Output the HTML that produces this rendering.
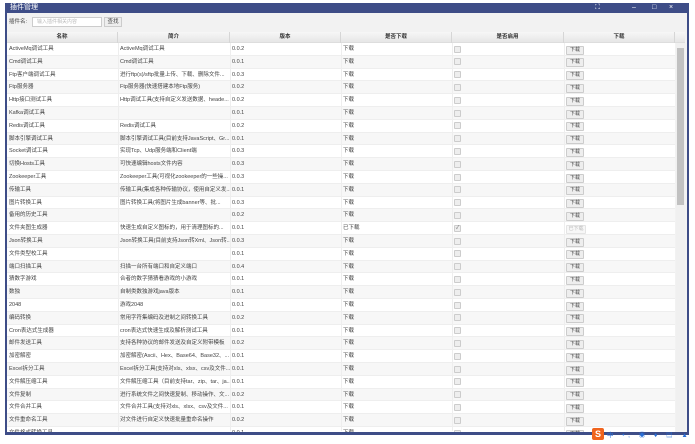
<!DOCTYPE html>
<html><head><meta charset="utf-8"><style>
*{margin:0;padding:0;box-sizing:border-box}
body{width:695px;height:444px;background:#fff;position:relative;overflow:hidden;font-family:"Liberation Sans","Noto Sans CJK SC",sans-serif;font-size:5.5px;color:#444}
.win{position:absolute;left:5px;top:3px;width:684px;height:434px;border:2px solid #3e4d87;border-top:none;background:#f2f2f2}
.title{position:absolute;left:5px;top:3px;width:684px;height:10px;background:#3e4d87;color:#fff;font-size:7px;line-height:10px;padding-left:5px}
.tb{position:absolute;top:18px;left:9px;font-size:5.5px;line-height:9px}
.inp{position:absolute;left:32px;top:17px;width:70px;height:10px;border:1px solid #ccc;background:#fff;color:#bbb;font-size:5px;line-height:8px;padding-left:4px}
.btn0{position:absolute;left:104px;top:17px;width:18px;height:10px;border:1px solid #ccc;background:#eee;font-size:5.5px;line-height:8px;text-align:center}
.hdr{position:absolute;left:7px;top:32px;width:678px;height:11px;background:linear-gradient(#f7f7f7,#e6e6e6);border-bottom:1px solid #ddd}
.hdr div{position:absolute;top:0;height:11px;line-height:11px;text-align:center;border-right:1px solid #d6d6d6;font-size:5.5px;font-weight:bold;color:#333}
.row{position:absolute;left:7px;width:668px;height:12.8px;line-height:12.8px;border-bottom:1px solid #eee}
.row span{position:absolute;top:0;white-space:nowrap;overflow:hidden}
.cb{position:absolute;left:447px;top:2.5px;width:7px;height:7px;border:1px solid #ccc;border-radius:1px;background:#eee}
.bt{position:absolute;left:559px;top:2.5px;width:18px;height:9px;border:1px solid #ccc;border-radius:1px;background:#eee;line-height:7px;text-align:center;font-size:5px}
.sb{position:absolute;left:676px;top:43px;width:9px;height:388px;background:#f0f0f0}
.th{position:absolute;left:677px;top:48px;width:7px;height:157px;background:#c1c1c1}
.vl{position:absolute;top:43px;width:1px;height:388px;background:#eee}
</style></head><body>
<div class="win"></div>
<div class="title">插件管理<span style="position:absolute;left:590px;font-size:7px">⛶</span><span style="position:absolute;left:627px">–</span><span style="position:absolute;left:647px">□</span><span style="position:absolute;left:664px">×</span></div>
<div class="tb">插件名:</div>
<div class="inp">输入插件相关内容</div>
<div class="btn0">查找</div>
<div class="hdr">
<div style="left:0;width:111px">名称</div>
<div style="left:111px;width:112px">简介</div>
<div style="left:223px;width:111px">版本</div>
<div style="left:334px;width:111px">是否下载</div>
<div style="left:445px;width:112px">是否启用</div>
<div style="left:557px;width:111px">下载</div>
</div>
<div id="rows"></div>
<div class="vl" style="left:118px"></div><div class="vl" style="left:230px"></div><div class="vl" style="left:341px"></div><div class="vl" style="left:452px"></div><div class="vl" style="left:564px"></div>
<div class="sb"></div><div class="th"></div>
<div style="position:absolute;left:0;top:432px;width:695px;height:12px;background:#fff"></div>
<div style="position:absolute;left:5px;top:432px;width:684px;height:3px;background:#3e4d87"></div>
<div style="position:absolute;left:592px;top:428px;width:12px;height:12px;background:#f0641e;color:#fff;font-size:9px;font-weight:bold;text-align:center;line-height:12px;border-radius:2px">S</div>
<div style="position:absolute;left:607px;top:429px;font-size:6.5px;color:#2a6fd6;letter-spacing:3.5px;white-space:nowrap">中 •, ◉ ♦ ▤ ▲ ▼ ▦</div>
<script>
var d=[["ActiveMq调试工具","ActiveMq调试工具","0.0.2"],["Cmd调试工具","Cmd调试工具","0.0.1"],["Ftp客户端调试工具","进行ftp(s)/sftp批量上传、下载、删除文件...","0.0.3"],["Ftp服务器","Ftp服务器(快速搭建本地Ftp服务)","0.0.2"],["Http接口测试工具","Http调试工具(支持自定义发送数据、heade...","0.0.2"],["Kafka调试工具","","0.0.1"],["Redis调试工具","Redis调试工具","0.0.2"],["脚本引擎调试工具","脚本引擎调试工具(目前支持JavaScript、Gr...","0.0.1"],["Socket调试工具","实现Tcp、Udp服务端和Client端","0.0.3"],["切换Hosts工具","可快速编辑hosts文件内容","0.0.3"],["Zookeeper工具","Zookeeper工具(可视化zookeeper的一些操...","0.0.3"],["传输工具","传输工具(集成各种传输协议，使用自定义发...","0.0.1"],["图片转换工具","图片转换工具(将图片生成banner等、批...","0.0.3"],["备用的历史工具","","0.0.2"],["文件夹图生成器","快速生成自定义图标的，用于清理图标的...","0.0.1",1],["Json转换工具","Json转换工具(目前支持Json转Xml、Json转...","0.0.3"],["文件类型校工具","","0.0.1"],["端口扫描工具","扫描一台所有端口和自定义端口","0.0.4"],["猜数字游戏","合者的数字猜猜看游戏的小游戏","0.0.1"],["数独","自制类数独游戏java版本","0.0.1"],["2048","游戏2048","0.0.1"],["编码转换","常用字符集编码及进制之间转换工具","0.0.2"],["Cron表达式生成器","cron表达式快速生成及解析测试工具","0.0.1"],["邮件发送工具","支持各种协议的邮件发送及自定义附带模板","0.0.2"],["加密解密","加密解密(Ascii、Hex、Base64、Base32、...","0.0.1"],["Excel拆分工具","Excel拆分工具(支持对xls、xlsx、csv及文件...","0.0.1"],["文件解压缩工具","文件解压缩工具（目前支持tar、zip、tar、ja...","0.0.1"],["文件复制","进行系统文件之间快速复制、移动操作、文...","0.0.2"],["文件合并工具","文件合并工具(支持对xls、xlsx、csv及文件...","0.0.1"],["文件重命名工具","对文件进行自定义快速批量重命名操作","0.0.2"],["文件格式转换工具","","0.0.1"]];
var h="";d.forEach(function(r,i){var t=43+i*12.8;var dl=r[3];
h+='<div class="row" style="top:'+t+'px;background:'+(i%2?'#f7f7f7':'#fff')+'"><span style="left:2px;width:108px">'+r[0]+'</span><span style="left:113px;width:110px">'+r[1]+'</span><span style="left:225px">'+r[2]+'</span><span style="left:336px">'+(dl?'已下载':'下载')+'</span><div class="cb" style="'+(dl?'color:#555;font-size:5px;line-height:5px;text-align:center':'')+'">'+(dl?'✓':'')+'</div><div class="bt" style="'+(dl?'color:#bbb;background:#f7f7f7;border-color:#e4e4e4;width:20px':'')+'">'+(dl?'已下载':'下载')+'</div></div>';});
document.getElementById("rows").innerHTML=h;
</script>
</body></html>
